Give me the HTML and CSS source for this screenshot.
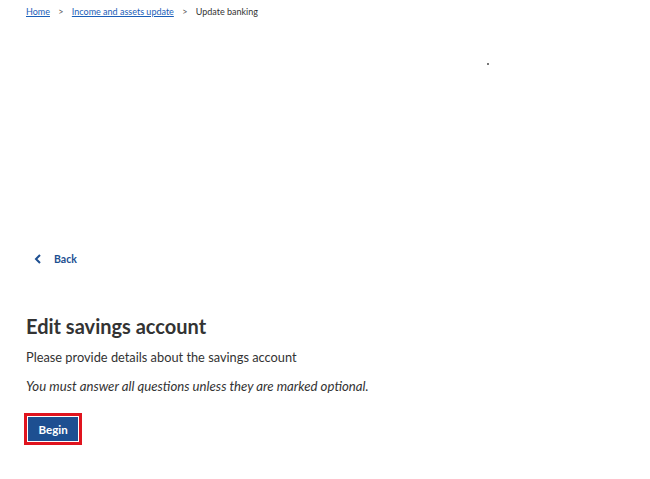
FILE: index.html
```html
<!DOCTYPE html>
<html>
<head>
  <title>Update banking</title>
  <link rel="stylesheet" href="styles.css">
</head>
<body>
  <nav class="breadcrumb">
    <a href="#">Home</a>
    <span class="sep">&gt;</span>
    <a href="#">Income and assets update</a>
    <span class="sep">&gt;</span>
    <span class="current">Update banking</span>
  </nav>

  <div class="spacer">
    <span class="dot"></span>
  </div>

  <div class="page">
    <a class="back" href="#">
      <svg width="8" height="10" viewBox="0 0 8 10">
        <path d="M6 1 L2 5 L6 9" fill="none" stroke="#1d4f91" stroke-width="2"/>
      </svg>
      <span>Back</span>
    </a>

    <h1>Edit savings account</h1>
    <p class="lead">Please provide details about the savings account</p>
    <p class="note">You must answer all questions unless they are marked optional.</p>

    <button class="btn">Begin</button>
  </div>
</body>
</html>
```

FILE: styles.css
```css
/* Base */
body {
  margin: 0;
  font-family: Lato, "Open Sans", sans-serif;
  color: #333;
  background: #fff;
}

/* Breadcrumb */
.breadcrumb {
  padding: 5px 26px 0;
  font-size: 9px;
  line-height: 13px;
  color: #333;
}

.breadcrumb a {
  color: #1a5eb8;
}

.breadcrumb .sep {
  margin: 0 6px;
  color: #555;
}

/* Empty banner area */
.spacer {
  height: 235px;
  position: relative;
}

.dot {
  position: absolute;
  left: 487px;
  top: 45px;
  width: 2px;
  height: 2px;
  background: #777;
}

/* Main content */
.page {
  padding: 0 26px;
}

.back {
  display: flex;
  align-items: center;
  gap: 12px;
  padding-left: 8px;
  color: #1d4f91;
  font-weight: bold;
  font-size: 10.5px;
  text-decoration: none;
}

h1 {
  margin: 47px 0 0;
  font-size: 20px;
  line-height: 28px;
  font-weight: bold;
  color: #333;
}

.lead {
  margin: 8px 0 0;
  font-size: 12.8px;
  line-height: 18px;
}

.note {
  margin: 11px 0 0;
  font-size: 13.2px;
  line-height: 18px;
  font-style: italic;
}

.btn {
  margin: 18px 0 0 -2px;
  padding: 0 14.5px;
  height: 32px;
  border: 0;
  box-shadow: inset 0 0 0 3px #e0141e, inset 0 0 0 4px #fff;
  background: #1d4f91;
  color: #fff;
  font-family: inherit;
  font-weight: bold;
  font-size: 11.5px;
}
```
